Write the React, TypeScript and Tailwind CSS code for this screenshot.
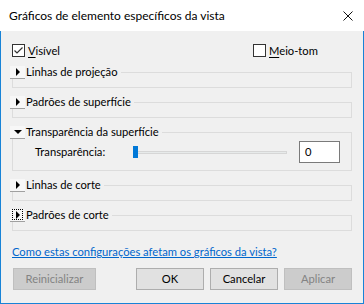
import React from 'react';

const font = { fontFamily: 'Lato, "Liberation Sans", sans-serif' };

function Toggle({ open, focused }: { open?: boolean; focused?: boolean }) {
  return (
    <span className="flex h-[13px] w-[15px] items-center justify-center border-b border-[#a0a0a0] bg-[#f7f7f7]">
      <span className={focused ? 'flex h-[11px] w-[11px] items-center justify-center outline outline-1 outline-dotted outline-black -outline-offset-1' : 'flex items-center justify-center'}>
        {open ? (
          <span className="h-0 w-0 border-x-[4px] border-t-[4px] border-x-transparent border-t-black" />
        ) : (
          <span className="h-0 w-0 border-y-[4px] border-l-[4px] border-y-transparent border-l-black" />
        )}
      </span>
    </span>
  );
}

function Group({ label, open, focused, children }: { label: string; open?: boolean; focused?: boolean; children?: React.ReactNode }) {
  return (
    <div className="flex flex-col">
      <div className="relative z-10 -ml-[2px] flex h-[14px] items-center">
        <Toggle open={open} focused={focused} />
        <span className="bg-[#f0f0f0] pl-[1px] pr-[3px] text-[11.2px] leading-[14px] text-black">{label}</span>
      </div>
      <div className={open ? '-mt-[7px] h-[39px] border border-[#dcdcdc]' : '-mt-[7px] h-[16px] border border-[#dcdcdc]'}>{children}</div>
    </div>
  );
}

function Checkbox({ checked, label, accel }: { checked?: boolean; label: string; accel: string }) {
  return (
    <label className="flex items-center gap-[3px]">
      <span className="flex h-[13px] w-[13px] items-center justify-center border border-[#333333] bg-white">
        {checked && (
          <svg width="11" height="11" viewBox="0 0 11 11">
            <path d="M1.5 5.5 L4 8 L9.5 2.5" fill="none" stroke="#333333" strokeWidth="1.2" />
          </svg>
        )}
      </span>
      <span className="text-[11.2px] leading-[14px] text-black">
        <span className="underline underline-offset-2">{accel}</span>
        {label}
      </span>
    </label>
  );
}

function Btn({ children, disabled }: { children: React.ReactNode; disabled?: boolean }) {
  return (
    <button
      type="button"
      className={
        disabled
          ? 'flex h-[22px] w-full items-center justify-center border border-[#bfbfbf] bg-[#cccccc] text-[11.2px] text-[#838383]'
          : 'flex h-[22px] w-full items-center justify-center border border-[#adadad] bg-[#e1e1e1] text-[11.2px] text-black'
      }
    >
      {children}
    </button>
  );
}

export default function App() {
  return (
    <div className="flex h-[304px] w-[364px] flex-col bg-[#f0f0f0]" style={font}>
      <div className="flex h-[31px] items-center justify-between bg-white pl-[9px] pr-[11px]">
        <span className="text-[12px] text-black">Gráficos de elemento específicos da vista</span>
        <svg width="10" height="10" viewBox="0 0 10 10">
          <path d="M0.5 0.5 L9.5 9.5 M9.5 0.5 L0.5 9.5" stroke="#111" strokeWidth="1" />
        </svg>
      </div>
      <div className="flex flex-1 flex-col border-x border-b border-[#1883d7] px-[11px]">
        <div className="mt-[13px] flex h-[13px] items-center">
          <div className="w-[241px]">
            <Checkbox checked accel="V" label="isível" />
          </div>
          <Checkbox accel="M" label="eio-tom" />
        </div>
        <div className="mt-[8px] flex flex-col gap-[7px]">
          <Group label="Linhas de projeção" />
          <Group label="Padrões de superfície" />
          <Group label="Transparência da superfície" open>
            <div className="flex h-full items-center pl-[22px] pr-[11px] pt-[1px]">
              <span className="w-[98px] self-start pt-[11px] text-[11.2px] leading-[14px] text-black">Transparência:</span>
              <div className="relative flex h-[12px] w-[154px] items-center">
                <div className="h-[3px] w-full border border-[#d6d6d6] bg-[#e7eaea]" />
                <div className="absolute left-0 top-0 h-[12px] w-[5px] bg-[#0078d7]" />
              </div>
              <div className="ml-auto flex h-[22px] w-[41px] items-center border border-[#7a7a7a] bg-white pl-[5px] text-[11.2px] text-black">0</div>
            </div>
          </Group>
          <Group label="Linhas de corte" />
          <Group label="Padrões de corte" focused />
        </div>
        <a href="#" className="mt-[14px] self-start text-[11.2px] leading-[14px] text-[#0066cc] underline">
          Como estas configurações afetam os gráficos da vista?
        </a>
        <div className="mt-[9px] flex">
          <div className="ml-[1px] w-[83px]">
            <Btn disabled>Reinicializar</Btn>
          </div>
          <div className="ml-auto grid grid-cols-[68px_68px_68px] gap-[6px]">
            <Btn>OK</Btn>
            <Btn>Cancelar</Btn>
            <Btn disabled>Aplicar</Btn>
          </div>
        </div>
      </div>
    </div>
  );
}
